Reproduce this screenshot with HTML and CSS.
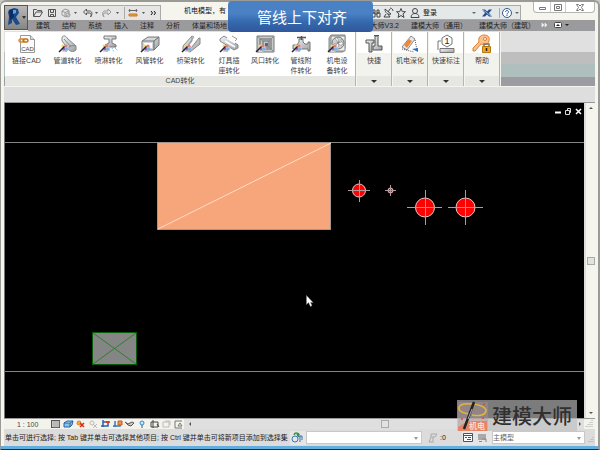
FILE: index.html
```html
<!DOCTYPE html>
<html lang="zh-CN">
<head>
<meta charset="utf-8">
<title>机电模型</title>
<link rel="stylesheet" href="styles.css">
</head>
<body>
<svg class="defs" aria-hidden="true">
  <defs>
    <linearGradient id="steel" x1="0" y1="0" x2="1" y2="1"><stop offset="0" stop-color="#f4f6f6"/><stop offset="1" stop-color="#9a9fa2"/></linearGradient>
    <g id="wand"><path d="M3 15l3-4 4 1 1 3-3 3H4z" fill="#d8d0f0"/><circle cx="5" cy="12" r="1.5" fill="#f5d560"/><circle cx="8" cy="12" r="1.6" fill="#e87a78"/><circle cx="9" cy="15" r="1.6" fill="#72b4e8"/><circle cx="6" cy="15" r="1.5" fill="#9a62c8"/><circle cx="8" cy="17" r="1" fill="#83d089"/><path d="M1 18L6.500 12.500" stroke="#222" stroke-width="1.500"/></g>
  </defs>
</svg>
<div class="window">
  <header class="head">
    <button class="app" aria-label="应用程序菜单"><svg width="22" height="23" viewBox="0 0 22 23"><path d="M4 4l5-2 4 1 1 4-3 4 4 7-4 1-4-6v4l-4 2 1-8-1-5z" fill="#174b8c"/><path d="M4 4l4-1 1 8-4 3z" fill="#0c2e64"/><path d="M8 4l3 0v3l-3 1z" fill="#6a9fd4"/><path d="M17 10h4l-2 3z" fill="#333"/></svg></button>
    <div class="head-main">
      <div class="titlebar">
        <div class="quick">
          <svg width="132" height="14" viewBox="0 0 132 14" fill="none" stroke="#555">
            <path d="M5.500 10V3.500h3l1 1h4V6M5.500 10.500L8 6h6.500L12 10.500z"/>
            <path d="M20.500 3.500h7v7h-7zM22.500 3.500v3h3v-3M22.500 10.500v-2h3v2"/>
            <path d="M34 5l3-2 4 1.500v4L38 11l-4-2zM34 5l3 1.500L41 5M37 6.500V11" stroke="#999"/><circle cx="40" cy="9" r="2" stroke="#999"/>
            <path d="M46 6h3l-1.500 2zM67 6h3l-1.500 2zM88 6h3l-1.500 2zM114 6h3l-1.500 2z" fill="#555" stroke="none"/>
            <path d="M58.500 3L55.500 6l3 3V7h3c2 0 2 2 1 4 2-2 2-6-1-6h-3z"/>
            <path d="M80 3l3 3-3 3V7h-3c-2 0-2 2-1 4-2-2-2-6 1-6h3z" stroke="#999"/>
            <path d="M96.500 1v12" stroke="#aaa"/>
            <path d="M101 4.500h8M102 3l-1 1.500 1 1.500M108 3l1 1.500-1 1.500" stroke="#666"/><path d="M101 8h8v2h-8z" fill="#f4a034" stroke="#c77b24"/>
            <path d="M123 5l1.500 2-1.500 2M126 5l1.500 2-1.500 2" stroke="#111"/>
          </svg>
        </div>
        <h1 class="doc">机电模型，有</h1>
        <div class="info">
          <svg width="52" height="14" viewBox="0 0 52 14" fill="none" stroke="#444">
            <path d="M3 4h2v3H3zM7 4h2v3H7zM2 7h3v4H2zM7 7h3v4H7zM5 8h2"/>
            <path d="M15 3c0 4 3 6 6 5zM18 6l2-3M16 8l-2 3h6l-2-3M20 2c2 0 3 2 3 3"/>
            <path d="M31 2.500l1.300 3.200h3.200L33 8l1 3.500-3-2-3 2L29 8l-2.500-2.300h3.200z"/>
            <circle cx="45" cy="5" r="2.500"/><path d="M41 11.500c0-3 2-4 4-4s4 1 4 4z"/>
          </svg>
          <a class="login" href="#">登录</a>
          <svg class="info-end" width="52" height="14" viewBox="0 0 52 14" fill="none">
            <path d="M4 6h4L6 8zM47 6h4l-2 2z" fill="#666"/>
            <path d="M14 3.500h3l2 2 2-2h3l-3 3.500 3 3.500h-3l-2-2-2 2h-3L17 7z" fill="#284b8b"/><path d="M15 4l8 6" stroke="#8fb5df"/>
            <path d="M31.500 2v10" stroke="#aaa"/><circle cx="39" cy="7" r="4.500" fill="#fff" stroke="#31578b"/><path d="M37.500 6c0-2 3-2 3 0 0 1-1.500 1-1.500 2.500M39 9v1" stroke="#26518b"/>
          </svg>
        </div>
        <div class="winbtns">
          <button aria-label="最小化"><svg width="16" height="11" viewBox="1 0 16 11"><path d="M6.500 5.500h6v2h-6z" fill="#fff" stroke="#777"/></svg></button>
          <button aria-label="还原"><svg width="14" height="11" viewBox="2 0 14 11"><path d="M5.500 2.500h7v6h-7zM7.500 4.500h3v2h-3z" fill="#fff" stroke="#777"/></svg></button>
          <button class="close" aria-label="关闭"><svg width="28" height="11" viewBox="-1 0 28 11"><path d="M9.500 2.500h2l1.500 1.500 1.500-1.500h2L14.500 5.500l2 3h-2L13 7l-1.500 1.500h-2l2-3z" fill="#fff" stroke="#777"/></svg></button>
        </div>
      </div>
      <nav class="tabs">
        <a href="#">建筑</a><a href="#">结构</a><a href="#">系统</a><a href="#">插入</a><a href="#">注释</a><a href="#">分析</a><a href="#">体量和场地</a>
        <div class="tabs-end">
          <a href="#">大师V3.2</a><a href="#">建模大师（通用）</a><a href="#">建模大师（建筑）</a>
          <svg width="28" height="10" viewBox="0 0 28 10"><path d="M1 3l2 2-2 2zM4 3l2 2-2 2z" fill="#fff" stroke="#ddd"/><rect x="13.500" y="2.500" width="7" height="5" rx="1" fill="#fff" stroke="#444"/><path d="M15 6h4l-2-2zM24 4h4l-2 2z" fill="#222"/></svg>
        </div>
      </nav>
    </div>
  </header>

  <section class="ribbon">
    <div class="panel cad">
      <div class="tools">
        <button class="tool"><svg viewBox="0 0 20 20"><path d="M3.500 1.500h10l4 4v13h-14z" fill="#fafafa" stroke="#999"/><path d="M13.500 1.500v4h4" fill="#ddd" stroke="#999"/><rect x="2" y="5" width="5" height="3" rx="1.500" fill="none" stroke="#e88b1d" stroke-width="1.500"/><rect x="6" y="5" width="5" height="3" rx="1.500" fill="none" stroke="#b97524" stroke-width="1.500"/><text x="10.500" y="17" text-anchor="middle" class="cadtext">CAD</text></svg>链接CAD</button>
        <button class="tool"><svg viewBox="0 0 20 20"><path d="M4 3c2-2 4-1 5 1l9 8v4c-2 2-5 2-7 0L4 7z" fill="url(#steel)" stroke="#888"/><path d="M6 5l7 8M10 15c1-3 4-4 8-3" fill="none" stroke="#888"/><use href="#wand"/></svg>管道转化</button>
        <button class="tool"><svg viewBox="0 0 20 20"><path d="M5 2h12v3h-4v4l4 2v2H6v-2l4-2V5H5z" fill="url(#steel)" stroke="#777"/><path d="M10 14v4M13 14l2 4M16 14l3 3" stroke="#65b2dd" stroke-dasharray="1 1"/><use href="#wand"/></svg>喷淋转化</button>
        <button class="tool"><svg viewBox="0 0 20 20"><path d="M2 7l6-4h11l-5 4v9H2z" fill="#d4d8d9" stroke="#777"/><path d="M2 7h12l5-4v8l-5 5V7" fill="url(#steel)" stroke="#777"/><path d="M4 9h8v5H4z" fill="#fff"/><use href="#wand"/></svg>风管转化</button>
        <button class="tool"><svg viewBox="0 0 20 20"><path d="M2 12L11 2v5l-5 6 4 1 8-10h1v6L9 18l-7-2z" fill="url(#steel)" stroke="#888"/><path d="M11 2l2 1-6 8M9 17V14" fill="none" stroke="#999"/><use href="#wand"/></svg>桥架转化</button>
        <button class="tool two"><svg viewBox="0 0 20 20"><path d="M1 5l4-3 14 9v3l-4 2L1 7z" fill="url(#steel)" stroke="#888"/><path d="M6 7l10 6M8 4l8 5" stroke="#fff" stroke-width="1.500"/><path d="M13 2l5 3-2 2" fill="none" stroke="#999"/><use href="#wand"/></svg>灯具插<br>座转化</button>
        <button class="tool two"><svg viewBox="0 0 20 20"><path d="M2 2h17v16H2z" fill="#c5cbcd" stroke="#777"/><path d="M5 5h11v10H5zM8 7h6v6H8z" fill="none" stroke="#666"/><path d="M2 2l7 6M19 2l-5 5M19 18l-5-5" stroke="#888"/><path d="M10 9h3v3h-3z" fill="#666"/><use href="#wand"/></svg>风口转化</button>
        <button class="tool two"><svg viewBox="0 0 20 20"><path d="M2 11h4l2-3V5h4v3l2 2h3V8h2v9h-2v-2H2z" fill="url(#steel)" stroke="#777"/><path d="M6 3.500h9M10.500 2v4" stroke="#555" stroke-width="1.500"/><use href="#wand"/></svg>管线附<br>件转化</button>
        <button class="tool two"><svg viewBox="0 0 20 20"><path d="M2 4l2-3h14v13l-2 4H2z" fill="#bbb" stroke="#888"/><path d="M4 2h14v15H4z" fill="#eee" stroke="#888"/><circle cx="11" cy="9" r="6" fill="#cdd3d4" stroke="#777"/><path d="M11 9c-1-3-3-4-3-5 3-1 4 2 3 5zm0 0c3-2 5-1 5 1-2 2-4 1-5-1zm0 0c1 3 0 5-2 5-1-2 0-4 2-5zm0 0c2-3 4-4 4-3 0 2-2 3-4 3zm0 0c-3 0-5 1-5 2" fill="#fff" stroke="#777" stroke-width=".6"/><use href="#wand"/></svg>机电设<br>备转化</button>
      </div>
      <h2 class="caption">CAD转化</h2>
    </div>
    <div class="panel"><button class="tool"><svg viewBox="0 0 20 20"><path d="M2 6h8v3H8v9H5V9H2z" fill="url(#steel)" stroke="#555"/><path d="M11 2h3v10h4v4H9v-4h2z" fill="url(#steel)" stroke="#555"/><path d="M10 1.500h5" stroke="#555"/></svg>快捷</button><span class="caption drop"></span></div>
    <div class="panel"><button class="tool"><svg viewBox="0 0 20 20"><path d="M2 13L11 2l4 3-8 11z" fill="#e8e8e8" stroke="#888"/><path d="M4 11l5-6 3 2-5 7z" fill="#ec873e"/><path d="M2 15l12 3M15 6l2 10" stroke="#555" stroke-dasharray="1 1"/><path d="M12 15l6 3v-4z" fill="#2571c3"/></svg>机电深化</button><span class="caption drop"></span></div>
    <div class="panel"><button class="tool"><svg viewBox="0 0 20 20"><path d="M5 7H2v9" fill="none" stroke="#777"/><path d="M11 1l5 3v6l-5 3-5-3V4z" fill="#fff" stroke="#777"/><path d="M4 14.500h14v4H4z" fill="url(#steel)" stroke="#777"/><text x="11" y="10" text-anchor="middle" class="one">1</text></svg>快速标注</button><span class="caption drop"></span></div>
    <div class="panel"><button class="tool"><svg viewBox="0 0 20 20"><path d="M9 10l-6 7H1v-3l6-6c-1-4 1-7 5-7s6 2 5 6-4 4-8 3z" fill="#f9c28c" stroke="#dd7d2f"/><circle cx="13" cy="5" r="1.500" fill="#fff" stroke="#dd7d2f"/><path d="M12 12v-2h5v2" fill="none" stroke="#777" stroke-width="1.500"/><path d="M10.500 12.500h8v6h-8z" fill="#f7a51f" stroke="#b97712"/><path d="M14.500 14v3" stroke="#222" stroke-width="1.500"/></svg>帮助</button><span class="caption drop"></span></div>
  </section>
  <div class="options"></div>

  <main class="work">
    <div class="canvas">
      <svg class="drawing" width="100%" height="100%" fill="none" aria-label="平面视图">
        <path d="M550 9.500h6" stroke="#fff" stroke-width="2"/><path d="M560.500 7.500h4v4h-4zM562.500 7v-1.500h3v4h-1.500" stroke="#ddd"/><path d="M571 6l5 5M576 6l-5 5" stroke="#fff" stroke-width="1.500"/>
        <path d="M0 39.500h2000M0 268.500h2000" stroke="#858585"/>
        <rect x="152.500" y="39.500" width="173" height="87" fill="#f7a57b" stroke="#a5948c"/><path d="M153 126L326 40" stroke="#ffdcc4"/>
        <rect x="87.500" y="229.500" width="44" height="32" fill="#858585" stroke="#075b07"/><path d="M88 230l43 31M88 261l43-31" stroke="#278427"/>
        <g fill="#f00" stroke="#e8c8c8"><circle cx="354" cy="87.500" r="6.500"/><circle cx="385.500" cy="87.500" r="2.500"/><circle cx="420" cy="104.500" r="9.500"/><circle cx="460.500" cy="104.500" r="9.500"/></g>
        <path d="M343 87.500h22M354.500 77v22M380 87.500h11M385.500 82v11M402 104.500h35M420.500 87v35M443 104.500h35M460.500 87v35" stroke="#b09c9c"/>
        <path d="M301.500 192.500v9l2-2 2 4 1.500-1-1.500-3h2.500z" fill="#fff" stroke="#888" stroke-width=".5"/>
      </svg>
    </div>
    <div class="vscroll"><i class="up"></i><i class="thumb"></i><i class="down"></i></div>
  </main>

  <div class="viewbar">
    <span class="scale">1 : 100</span>
    <svg width="134" height="10" viewBox="0 0 134 10" fill="none" stroke="#555">
      <rect x="1.500" y="1.500" width="8" height="7" fill="#ddd"/><path d="M2 3h8M2 5h8M2 7h8M4 2v7M6 2v7M8 2v7" stroke="#999" stroke-width=".6"/>
      <path d="M14 4l3-2h6l-1 4-2 2h-6zM14 4h6l3-2M20 4v4" fill="#8bc1ec" stroke="#2664a5"/>
      <circle cx="29" cy="4" r="2" fill="#f9b44c" stroke="#d87e20"/><path d="M30 4l4 4M34 4l-4 4" stroke="#d32a19" stroke-width="1.500"/>
      <circle cx="42" cy="4" r="2" stroke="#bbb"/><path d="M43 5l4 4M47 5l-4 4" stroke="#bbb"/>
      <path d="M51 7h7V2M53 1v7M53 3h7" stroke="#2b62ab" stroke-width="1.500"/><path d="M56 3h3" stroke="#d63e24" stroke-width="2"/>
      <path d="M63 7h7V3M65 2v6" stroke="#3679b8" stroke-width="1.500"/><path d="M68 2h4v4h-4z" fill="#ee9140" stroke="#c95b24"/>
      <path d="M75 3l3 2 4-2 2 1-3 3-3-1z" fill="#ccc"/><circle cx="92" cy="4" r="2" fill="#cce8ff" stroke="#298bd8"/><path d="M92 6v3" stroke="#555"/>
      <path d="M101 3h7v5h-7zM103 1v8M107 5l2 3" stroke="#444"/><path d="M113 3h6v5h-6zM115 2h5v4" stroke="#bbb"/><path d="M125 2h7M125 2v7h7M130 4l-2 3h4z" stroke="#777"/>
    </svg>
    <div class="hscroll"><i class="left"></i><i class="thumb"></i><i class="right"></i></div>
    <svg class="grip" width="11" height="10" viewBox="0 0 11 10"><path d="M8 1v1M6 3v1M8 3v1M4 5v1M6 5v1M8 5v1M2 7v1M4 7v1M6 7v1M8 7v1" stroke="#aaa"/></svg>
  </div>

  <footer class="status">
    <span class="hint">单击可进行选择; 按 Tab 键并单击可选择其他项目; 按 Ctrl 键并单击可将新项目添加到选择集</span>
    <svg class="cell" width="16" height="14" viewBox="0 0 16 14" fill="none"><circle cx="5" cy="8" r="3" stroke="#3479b6"/><path d="M4 4c1-3 5-2 5 0M7 3l2 3" stroke="#3b8d4b" stroke-width="1.500"/><path d="M8 5h4v4M10 5v6" stroke="#3c6fa8"/></svg>
    <span class="combo grow"><select aria-label="工作集"><option></option></select></span>
    <svg width="34" height="14" viewBox="0 0 34 14" fill="none" stroke="#aaa"><path d="M9 3h6l-2 3H9zM9 6l-2 5h5M11 6v4"/></svg>
    <span class="count">:0</span>
    <svg class="cell icons" width="30" height="14" viewBox="0 0 30 14" fill="none"><path d="M1.500 2.500h9v8h-9zM1.500 4.500h9" fill="#fff" stroke="#456"/><path d="M3 6.500h2M5 8.500h4M6 6.500h3" stroke="#456"/><path d="M16 3h8v6h-8z" fill="#aaa"/><path d="M20 8h4v3M17 10.500h3" stroke="#888"/></svg>
    <span class="combo model"><select aria-label="设计选项"><option>主模型</option></select></span>
    <svg width="10" height="14" viewBox="0 0 10 14"><path d="M8 6v1M6 8v1M8 8v1M4 10v1M6 10v1M8 10v1" stroke="#aaa"/></svg>
  </footer>
  <div class="mark">
    <svg width="32" height="30" viewBox="0 0 32 30" fill="none"><path d="M1 1h30v29H1z" fill="#b3949b" fill-opacity=".4"/><path d="M11 20h19v10H1v-4z" fill="#e9805c" fill-opacity=".9"/><path d="M12 13C4 12 1 9 2 6c3-6 28-3 27 4-1 5-9 5-14 4" stroke="#e3b53c" stroke-width="1.500"/><path d="M17 1L7 28" stroke="#222" stroke-width="2.500"/><path d="M15 8l-4 10" stroke="#aaa"/><circle cx="27" cy="3" r="1" fill="#d94a2d"/><circle cx="5" cy="18" r="1" fill="#d94a2d"/><circle cx="26" cy="17" r="1" fill="#d94a2d"/><text x="12" y="28" class="mep">机电</text></svg>
    <span>建模大师</span>
  </div>
</div>
<div class="banner">管线上下对齐</div>
</body>
</html>
```

FILE: styles.css
```css
* { box-sizing: border-box; }
body {
  margin: 0;
  background: #c9c9c5;
  color: #444;
  font: 7px/9px "Liberation Sans", "Noto Sans CJK SC", sans-serif;
  position: relative;
}
svg { display: block; flex: none; }
.defs { position: absolute; width: 0; height: 0; }
a { color: inherit; text-decoration: none; }
button, select { font: inherit; color: inherit; border: 0; padding: 0; margin: 0; background: none; }
h1, h2 { font: inherit; margin: 0; }

.window {
  position: relative;
  display: flex;
  flex-direction: column;
  min-height: 100vh;
  background: #f5f5ee;
  border: solid #9a9a96;
  border-width: 2px 2px 1px 1px;
  border-bottom-color: #17313f;
  border-radius: 6px 6px 0 0;
  padding: 0 3px 3px;
  box-shadow: inset 0 -3px #62aede;
}

/* Title bar and tabs */
.head { display: flex; height: 29px; }
.app { width: 24px; height: 25px; margin-top: 3px; background: linear-gradient(#b8b8b8, #858585); border: 1px solid #555; }
.head-main { flex: 1; min-width: 0; }
.titlebar { display: flex; height: 18px; }
.quick { height: 15px; margin-top: 3px; background: #e5e5e5; border: solid #aaa; border-width: 1px 1px 0 0; }
.doc { margin: 4px 0 0 23px; color: #111; white-space: nowrap; }
.info { display: flex; align-items: center; width: 151px; height: 15px; margin: 3px 12px 0 auto; background: #e4e8e8; border: 1px solid #a8aaaa; border-left: 0; }
.login { color: #111; margin-left: 1px; }
.info-end { margin-left: auto; width: 52px; }
.winbtns { display: flex; height: 11px; background: #fff; border: 1px solid #b4b4b4; border-top: 0; border-radius: 0 0 4px 4px; }
.winbtns button + button { border-left: 1px solid #ccc; }
.tabs { display: flex; gap: 12px; height: 11px; padding-left: 8px; line-height: 11px; background: #9b9b9e; color: #222; white-space: nowrap; }
.tabs-end { display: flex; gap: 12px; margin-left: auto; padding-right: 20px; }
.tabs-end svg { margin: 0 6px 0 -6px; }

/* Ribbon */
.ribbon {
  display: flex;
  gap: 2px;
  height: 56px;
  padding: 1px 1px 0;
  background: linear-gradient(#e0e0e0 21px, #bebebe 21px 33px, #afbfbe 33px 46px, #9d9ba2 46px);
  border-bottom: 1px solid #f5f5f0;
}
.panel { display: flex; flex-direction: column; width: 34px; background: linear-gradient(#fff 21px, #f3f3ee 21px); box-shadow: 1px 0 #b4b4b4, 2px 0 #f5f5f0; }
.cad { width: 350px; background: #fff; }
.tools { display: flex; flex: 1; padding-left: 1px; }
.tool { display: flex; flex-direction: column; align-items: center; flex: 1; text-align: center; white-space: nowrap; line-height: 10px; }
.tools .tool { flex: 0 0 41px; }
.tools .two { flex-basis: 36px; }
.tool svg { width: 20px; height: 20px; margin: 2px 0; }
.cadtext { font: 6px "Liberation Sans", sans-serif; fill: #444; }
.one { font: 9px "Liberation Sans", sans-serif; fill: #222; }
.caption { height: 10px; line-height: 10px; text-align: center; background: #e6e6e2; }
.drop { display: flex; align-items: center; justify-content: center; }
.drop::after { content: ""; border: solid transparent; border-width: 3px 3px 0; border-top-color: #333; }
.options { height: 16px; background: #dedede; border-bottom: 1px solid #999; }

/* Drawing area */
.work { display: flex; flex: 1; min-height: 200px; }
.canvas { flex: 1; min-width: 0; background: #000; border-left: 1px solid #777; }
.drawing { width: 100%; height: 100%; }
.vscroll { display: flex; flex-direction: column; justify-content: space-between; align-items: center; width: 11px; padding: 4px 0; background: #f5f5ee; border-left: 2px solid #ddd; }
.up, .down, .left, .right { border: 2px solid transparent; }
.up { border-top-width: 0; border-bottom-color: #555; }
.down { border-bottom-width: 0; border-top-color: #555; }
.left { border-left-width: 0; border-right-color: #555; }
.right { border-right-width: 0; border-left-color: #555; }
.thumb { width: 8px; height: 8px; background: #e2e2e2; border: 1px solid #aaa; }

/* View controls */
.viewbar { display: flex; align-items: center; height: 11px; background: #f3f3ec; border-top: 1px solid #999; }
.scale { width: 46px; padding-left: 13px; white-space: nowrap; }
.hscroll { display: flex; flex: 1; justify-content: space-between; align-items: center; height: 10px; padding: 0 3px 0 5px; background: #dfdfdf; }

/* Status bar */
.status { display: flex; align-items: center; height: 17px; background: #dcdcdc; color: #222; }
.hint { flex: none; width: 284px; margin-right: 2px; padding-left: 1px; overflow: hidden; white-space: nowrap; }
.cell { background: #e6e6e6; }
.combo { position: relative; height: 13px; background: #fff; border: 1px solid #c8c8c8; }
.combo::after { content: ""; position: absolute; right: 3px; top: 5px; border: solid transparent; border-width: 3px 2px 0; border-top-color: #999; pointer-events: none; }
.combo select { display: block; width: 100%; height: 11px; appearance: none; color: #666; }
.grow { flex: 1; }
.model { width: 93px; }
.count { width: 22px; margin-left: -16px; }

/* Overlays */
.mark { position: absolute; right: 21px; bottom: 18px; display: flex; align-items: center; width: 120px; height: 31px; background: rgba(190, 190, 190, .65); color: #303030; font: 500 20px/30px "Noto Sans CJK SC", sans-serif; }
.mark span { margin-left: 3px; white-space: nowrap; }
.mep { font: bold 8px "Noto Sans CJK SC", sans-serif; fill: #fbdac9; }
.banner { position: absolute; top: 1px; left: 38%; width: 145px; height: 31px; padding-left: 3px; border-radius: 4px; background: linear-gradient(#4a80c4 0 40%, #3468ad 70%, #31579a); color: #fff; font: 15px/31px "Noto Sans CJK SC", sans-serif; text-align: center; }
```
